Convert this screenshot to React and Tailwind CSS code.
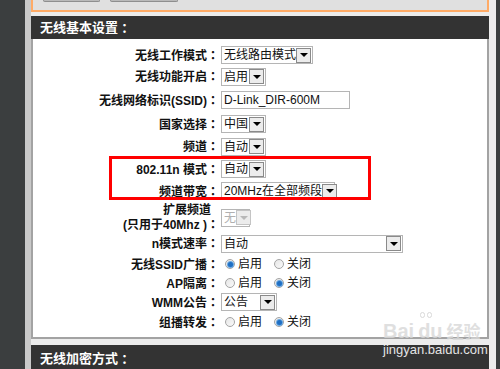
import React from 'react';

function Colon() {
    return <span className="font-['Noto_Sans_CJK_TC',sans-serif]">：</span>;
}

function Label({ text }) {
    if (typeof text !== 'string') return text;
    if (text.endsWith('：')) {
        return (
            <>
                {text.slice(0, -1)}
                <Colon />
            </>
        );
    }
    return text;
}

function Select({ value, width, disabled }) {
    return (
        <div className={`flex h-[18px] items-center justify-between border border-[#b5b5b5] bg-white pl-[2px] pr-px ${width}`}>
            <span className={`whitespace-nowrap text-[12px] leading-none ${disabled ? 'text-[#b0b0b0]' : 'text-[#111]'}`}>{value}</span>
            <span className={`flex h-[15px] w-[15px] shrink-0 items-center justify-center border bg-[#ececec] ${disabled ? 'border-[#c4c4c4]' : 'border-[#8a8a8a]'}`}>
                <span className={`h-0 w-0 border-x-[4px] border-t-[4px] border-x-transparent ${disabled ? 'border-t-[#b8b8b8]' : 'border-t-black'}`} />
            </span>
        </div>
    );
}

function Radio({ checked, label }) {
    return (
        <span className="flex items-center">
            <span className="mr-[3px] flex h-[10px] w-[10px] items-center justify-center rounded-full border border-[#a4a4a4] bg-gradient-to-br from-[#e6e6e6] to-[#fafafa]">
                {checked && <span className="h-[5px] w-[5px] rounded-full bg-[#1f6fc4] ring-1 ring-[#6aa7e0]" />}
            </span>
            <span className="text-[12px] leading-none text-[#111]">{label}</span>
        </span>
    );
}

function Radios({ on }) {
    return (
        <div className="flex items-center gap-[12px] pl-[4px]">
            <Radio checked={on} label="启用" />
            <Radio checked={!on} label="关闭" />
        </div>
    );
}

const rows = [
    { label: '无线工作模式：', h: 'h-[22px]', control: <Select value="无线路由模式" width="w-[92px]" /> },
    { label: '无线功能开启：', h: 'h-[21px]', control: <Select value="启用" width="w-[45px]" /> },
    {
        label: '无线网络标识(SSID)：',
        h: 'h-[26px]',
        control: (
            <div className="flex h-[18px] w-[129px] items-center border border-[#b5b5b5] bg-white pl-[2px] text-[12px] leading-none text-[#111]">
                D-Link_DIR-600M
            </div>
        ),
    },
    { label: '国家选择：', h: 'h-[22px]', control: <Select value="中国" width="w-[45px]" /> },
    { label: '频道：', h: 'h-[23px]', control: <Select value="自动" width="w-[45px]" /> },
    { label: '802.11n 模式：', h: 'h-[22px]', control: <Select value="自动" width="w-[45px]" /> },
    { label: '频道带宽：', h: 'h-[22px]', control: <Select value="20MHz在全部频段" width="w-[114px]" /> },
    {
        label: (
            <>
                <span className="block pr-[8px]">扩展频道</span>
                <span className="block">(只用于40Mhz )<Colon /></span>
            </>
        ),
        h: 'h-[31px]',
        control: <Select value="无" width="w-[29px]" disabled />,
    },
    { label: 'n模式速率：', h: 'h-[21px]', control: <Select value="自动" width="w-[182px]" /> },
    { label: '无线SSID广播：', h: 'h-[20px]', control: <Radios on /> },
    { label: 'AP隔离：', h: 'h-[18px]', control: <Radios on={false} /> },
    { label: 'WMM公告：', h: 'h-[20px]', control: <Select value="公告" width="w-[56px]" /> },
    { label: '组播转发：', h: 'h-[20px]', control: <Radios on={false} /> },
];

export default function App() {
    return (
        <div className="flex h-[369px] w-[500px] overflow-hidden bg-[#ececec] font-['Liberation_Sans','Noto_Sans_CJK_SC',sans-serif]">
            <div className="w-[25px] shrink-0 bg-[#3b3e3f]" />
            <div className="w-[6px] shrink-0 bg-[#c9c9c9]" />

            <div className="relative w-[458px] shrink-0">
                {/* top settings box (cut off) */}
                <div className="flex h-[12px] gap-[10px] border-x-2 border-b-2 border-[#ffab66] bg-[#e0e0e0] pl-[10px]">
                    <div className="h-[2px] w-[57px] rounded-b-sm border-x border-b border-[#8e8e8e] bg-[#b9b9b9]" />
                    <div className="h-[2px] w-[68px] rounded-b-sm border-x border-b border-[#8e8e8e] bg-[#b9b9b9]" />
                </div>

                <div className="mt-[4px] flex h-[23px] items-center bg-[#333333] pl-[9px] text-[13px] font-bold text-white">
                    无线基本设置<Colon />
                </div>

                <div className="relative border-x-2 border-b-2 border-[#a3a3a3] bg-white pb-[5px] pt-[5px]">
                    {rows.map((r, i) => (
                        <div key={i} className={`flex items-center ${r.h}`}>
                            <div className="w-[186px] shrink-0 text-right text-[12px] font-bold leading-[13px] text-[#111]">
                                <Label text={r.label} />
                            </div>
                            <div className="ml-[2px]">{r.control}</div>
                        </div>
                    ))}

                    {/* red annotation box */}
                    <div className="absolute left-[76px] top-[117px] h-[44px] w-[262px] border-[3px] border-[#ff0000]" />
                </div>

                <div className="mt-[6px] flex h-[30px] items-start bg-[#333333] pl-[9px] pt-[4px] text-[13px] font-bold text-white">
                    无线加密方式<Colon />
                </div>

                {/* baidu watermark */}
                <div className="absolute left-[352px] top-[321px] flex flex-col items-start">
                    <div className="flex items-end gap-[4px] text-[20px] font-bold leading-none text-[#d8d8d8] opacity-80">
                        <span>Bai</span>
                        <span className="relative">
                            du
                            <span className="absolute -top-[9px] left-[2px] flex gap-[2px]">
                                <span className="h-[6px] w-[5px] rounded-full border border-[#d0d0d0]" />
                                <span className="h-[6px] w-[5px] rounded-full border border-[#d0d0d0]" />
                            </span>
                        </span>
                        <span className="text-[17px]">经验</span>
                    </div>
                    <div className="mt-[2px] text-[13px] leading-none text-[#e4e4e4]">jingyan.baidu.com</div>
                </div>
            </div>

            <div className="w-[7px] shrink-0 bg-[#ececec]" />
            <div className="w-[4px] shrink-0 bg-[#3b3e3f]" />
        </div>
    );
}
